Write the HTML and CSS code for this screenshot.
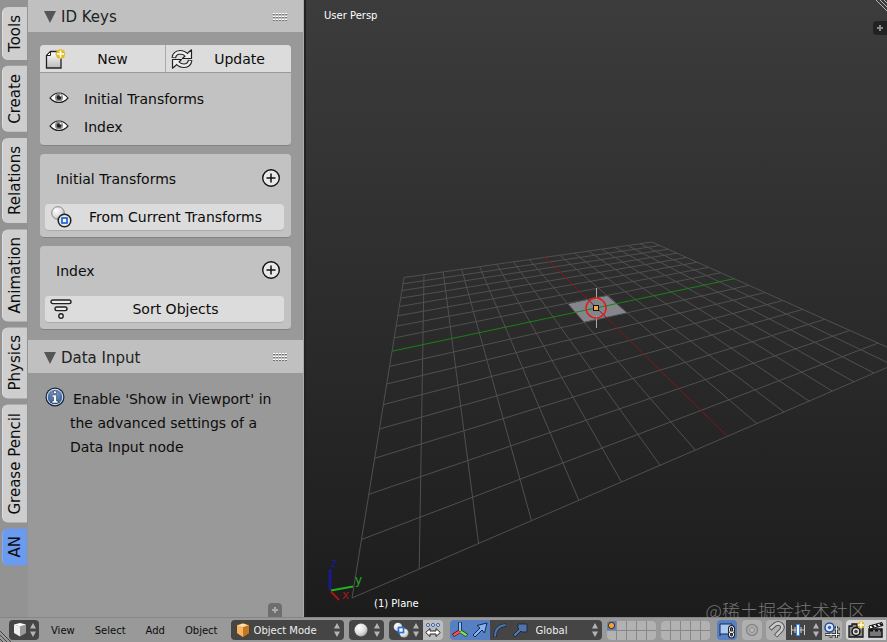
FILE: index.html
```html
<!DOCTYPE html>
<html lang="en">
<head>
<meta charset="utf-8">
<title>3D View</title>
<link rel="stylesheet" href="styles.css">
</head>
<body>
<svg class="defs" aria-hidden="true">
  <defs>
    <linearGradient id="paper" x1="0" y1="0" x2="0" y2="1"><stop offset="0" stop-color="#fff"/><stop offset="1" stop-color="#bbb"/></linearGradient>
    <radialGradient id="ball" cx=".35" cy=".3" r=".8"><stop offset="0" stop-color="#fff"/><stop offset=".6" stop-color="#ddd"/><stop offset="1" stop-color="#999"/></radialGradient>
    <radialGradient id="infoblue" cx=".5" cy=".3" r=".7"><stop offset="0" stop-color="#7fa0cc"/><stop offset="1" stop-color="#34588f"/></radialGradient>
    <symbol id="eye" viewBox="0 0 20 14">
      <path d="M1 7Q5 2 10 2T19 7Q15 11.500 10 11.500T1 7Z" fill="#fff" stroke="#222" stroke-width="1.200"/>
      <circle cx="10" cy="6.500" r="4" fill="#8a8a8a"/><circle cx="10" cy="6.500" r="2.300" fill="#222"/><circle cx="11.500" cy="4.500" r="1" fill="#fff"/>
    </symbol>
    <symbol id="plus" viewBox="0 0 20 20">
      <circle cx="10" cy="10" r="8.300" fill="#e8e8e8" stroke="#111" stroke-width="1.400"/>
      <path d="M10 5.500v9M5.500 10h9" stroke="#111" stroke-width="1.500"/>
    </symbol>
    <symbol id="grip" viewBox="0 0 15 9">
      <path d="M0 1.500h15M0 4.500h15M0 7.500h15" stroke="#777" stroke-dasharray="2 1"/>
      <path d="M0 .5h15M0 3.500h15M0 6.500h15" stroke="#fff" stroke-dasharray="2 1"/>
    </symbol>
    <symbol id="arrows" viewBox="0 0 6 14">
      <path d="M3 0l3 5.500H0zM3 14l3-5.500H0z" fill="#b4b4b4"/>
    </symbol>
    <g id="turn">
      <path d="M2.800 9Q3.500 3.500 9 3.200Q13 3.200 15.500 6" fill="none" stroke="#222" stroke-width="4.600"/>
      <path d="M20.500 .8V9.500H11.500L14 7l3-3.200z" fill="#eee" stroke="#222" stroke-width="1.200" stroke-linejoin="round"/>
      <path d="M2.900 8.200Q3.800 3.500 9 3.200Q13 3.200 16.500 6.800" fill="none" stroke="#eee" stroke-width="2.400"/>
    </g>
  </defs>
</svg>

<main class="workspace">
  <nav class="tabs" aria-label="Tool shelf tabs">
    <button class="tab">Tools</button>
    <button class="tab">Create</button>
    <button class="tab">Relations</button>
    <button class="tab">Animation</button>
    <button class="tab">Physics</button>
    <button class="tab">Grease Pencil</button>
    <button class="tab tab-active">AN</button>
  </nav>

  <aside class="shelf">
    <h2 class="panel-header">
      <svg class="fold" viewBox="0 0 12 12"><path d="M0 0h12L6 12z"/></svg>
      <span class="panel-title">ID Keys</span>
      <svg class="grip"><use href="#grip"/></svg>
    </h2>
    <div class="panel-body">
      <section class="box">
        <div class="button-row">
          <button class="btn">
            <svg class="icon" viewBox="0 0 20 22">
              <path d="M5.500 3.500H16V20H1.500V7.500z" fill="url(#paper)" stroke="#222" stroke-width="1.300"/>
              <path d="M5.500 3.500V7.500H1.500z" fill="#fff" stroke="#222"/>
              <circle cx="15.500" cy="6" r="4.500" fill="#e0b410"/>
              <path d="M15.500 1v10M10.500 6h10M12 2.500l7 7M19 2.500l-7 7" stroke="#e3bd22" stroke-width="2"/>
              <path d="M15.500 2.500v7M12 6h7" stroke="#fff" stroke-width="1.600"/>
            </svg>
            <span>New</span>
          </button>
          <button class="btn">
            <svg class="icon icon-wide" viewBox="0 0 22 20">
              <use href="#turn"/>
              <use href="#turn" transform="rotate(180 11 10)"/>
            </svg>
            <span>Update</span>
          </button>
        </div>
        <ul class="key-list">
          <li><button class="eye" aria-label="Toggle Initial Transforms"><svg><use href="#eye"/></svg></button>Initial Transforms</li>
          <li><button class="eye" aria-label="Toggle Index"><svg><use href="#eye"/></svg></button>Index</li>
        </ul>
      </section>

      <section class="box box-key">
        <div class="key-head"><h3>Initial Transforms</h3><button class="add" aria-label="Add to Initial Transforms"><svg><use href="#plus"/></svg></button></div>
        <button class="btn btn-round">
          <svg class="icon icon-wide" viewBox="0 0 22 22">
            <circle cx="8" cy="7" r="6.300" fill="url(#ball)" stroke="#888"/>
            <circle cx="14.500" cy="14.500" r="6.300" fill="#e8e8e8" stroke="#222" stroke-width="1.500"/>
            <rect x="12" y="12" width="5" height="5" fill="#fff" stroke="#1d63d8" stroke-width="1.700"/>
          </svg>
          <span>From Current Transforms</span>
        </button>
      </section>

      <section class="box box-key">
        <div class="key-head"><h3>Index</h3><button class="add" aria-label="Add to Index"><svg><use href="#plus"/></svg></button></div>
        <button class="btn btn-round">
          <svg class="icon icon-wide" viewBox="0 0 22 20">
            <g fill="#eee" stroke="#222" stroke-width="1.400">
              <rect x="1" y="1" width="20" height="3.600" rx="1.800"/>
              <rect x="5" y="8" width="12" height="3.600" rx="1.800"/>
              <circle cx="11" cy="17" r="2.200"/>
            </g>
          </svg>
          <span>Sort Objects</span>
        </button>
      </section>
    </div>

    <h2 class="panel-header">
      <svg class="fold" viewBox="0 0 12 12"><path d="M0 0h12L6 12z"/></svg>
      <span class="panel-title">Data Input</span>
      <svg class="grip"><use href="#grip"/></svg>
    </h2>
    <div class="info">
      <svg class="info-icon" viewBox="0 0 20 20">
        <circle cx="10" cy="10" r="9.500" fill="#14233e"/>
        <circle cx="10" cy="10" r="8.300" fill="#dfe6f0"/>
        <circle cx="10" cy="10" r="7.300" fill="url(#infoblue)"/>
        <path d="M8.500 4h3v2.500h-3zM7 8h4.500v6H13v2H7v-2h1.500v-4H7z" fill="#fff" stroke="#14233e" stroke-width=".5"/>
      </svg>
      <p>Enable 'Show in Viewport' in<br>the advanced settings of a<br>Data Input node</p>
    </div>
    <button class="shelf-toggle" aria-label="Show operator panel"><svg viewBox="0 0 14 14"><path d="M7 4v6M4 7h6" stroke="#aaa" stroke-width="2"/></svg></button>
  </aside>

  <section class="viewport" aria-label="3D viewport">
    <svg class="scene" viewBox="306 0 581 617" preserveAspectRatio="xMinYMax slice">
      <polygon points="568,304 608,295.500 627,313 584,322" fill="#85858c"/>
      <g id="grid" class="grid"></g>
      <path d="M596.500 288v12M596.500 316v12" stroke="#aaa"/>
      <circle cx="596" cy="308" r="10" class="cursor"/>
      <rect x="593.500" y="305.500" width="5" height="5" fill="#f0a850" stroke="#111"/>
      <path d="M330 590V569" stroke="#1a1a8c" stroke-width="3"/>
      <path d="M331 590.500L353 586.500" stroke="#1fb41f" stroke-width="2"/>
      <path d="M331 591.500L339 600" stroke="#a81414" stroke-width="2"/>
      <g class="axis-names">
        <text x="331" y="567" fill="#1a1a8c">z</text>
        <text x="355" y="584" fill="#1fb41f">y</text>
        <text x="342" y="599" fill="#a81414">x</text>
      </g>
    </svg>
    <span class="view-name">User Persp</span>
    <span class="object-name">(1) Plane</span>
    <svg class="corner" viewBox="0 0 12 12"><path d="M1 0l11 11M5 0l7 7M9 0l3 3" stroke="#b8b8b8"/></svg>
    <button class="side-toggle" aria-label="Show properties"><svg viewBox="0 0 14 14"><path d="M7 4v6M4 7h6" stroke="#888" stroke-width="2"/></svg></button>
  </section>
</main>

<footer class="header-bar">
  <svg class="corner-bl" viewBox="0 0 12 12"><path d="M0 1l11 11M0 5l7 7M0 9l3 3" stroke="#444"/></svg>
  <button class="dark editor" aria-label="Editor type">
    <svg class="i16" viewBox="0 0 16 16"><path d="M2 2.500l6 2v10L2 11z" fill="#eee"/><path d="M14 2.500l-6 2v10l6-3.500z" fill="#999"/><path d="M2 2.500L8 1l6 1.500-6 2z" fill="#fff"/></svg>
    <svg class="arrows"><use href="#arrows"/></svg>
  </button>
  <nav class="menus">
    <button>View</button><button>Select</button><button>Add</button><button>Object</button>
  </nav>
  <div class="dark mode">
    <svg class="i16" viewBox="0 0 16 16"><path d="M2 3l6-2 6 2v8l-6 4-6-4z" fill="#ffe0b0" stroke="#5a3208" stroke-width=".6"/><path d="M2 3l6 2v10l-6-4z" fill="#f5b566"/><path d="M14 3L8 5v10l6-4z" fill="#c8761c"/></svg>
    <select aria-label="Mode"><option>Object Mode</option></select>
    <svg class="arrows"><use href="#arrows"/></svg>
  </div>
  <button class="dark shading" aria-label="Viewport shading">
    <svg class="i16" viewBox="0 0 16 16"><circle cx="8" cy="8" r="6.500" fill="url(#ball)"/></svg>
    <svg class="arrows"><use href="#arrows"/></svg>
  </button>
  <div class="group pivot-group">
    <button class="dark pivot" aria-label="Pivot point">
      <svg class="i16" viewBox="0 0 16 16"><circle cx="5" cy="5" r="4.300" fill="url(#ball)"/><circle cx="11" cy="11" r="4.500" fill="url(#ball)"/><rect x="5.500" y="5.500" width="5" height="5" fill="#fff" stroke="#2a70d8" stroke-width="1.700"/></svg>
      <svg class="arrows"><use href="#arrows"/></svg>
    </button>
    <button class="light pale" aria-label="Manipulate center points">
      <svg class="i16" viewBox="0 0 16 16"><g fill="#fff" stroke="#2858a8"><circle cx="3" cy="3" r="1.500"/><circle cx="8" cy="3" r="1.500"/><circle cx="13" cy="3" r="1.500"/></g><path d="M.7 10.500L5 6.500v2.500h6V6.500l4.300 4-4.300 4V12H5v2.500z" fill="#fff" stroke="#222"/></svg>
    </button>
  </div>
  <div class="group manip-group">
    <button class="on" aria-label="Manipulator"><svg class="i18" viewBox="0 0 18 18"><path d="M9 10V1" stroke="#10244c" stroke-width="3.600"/><path d="M9 10l7 4.500" stroke="#123a12" stroke-width="3.800"/><path d="M9 10l-7 4.500" stroke="#4a1010" stroke-width="3.800"/><path d="M9 10V1.500" stroke="#8fc0ff" stroke-width="2"/><path d="M9.500 10.500l6 3.800" stroke="#7ee850" stroke-width="2.200"/><path d="M8.500 10.500l-6 3.800" stroke="#ff5050" stroke-width="2.200"/></svg></button>
    <button class="on" aria-label="Translate"><svg class="i18" viewBox="0 0 18 18"><path d="M2 14l7-7-3-2.500L16 2l-2.500 10L11 9l-7 7z" fill="#86b2f0" stroke="#14294f" stroke-linejoin="round"/></svg></button>
    <button class="off" aria-label="Rotate"><svg class="i18" viewBox="0 0 18 18"><path d="M4 16Q4 5 15 4" fill="none" stroke="#1c2c48" stroke-width="3.600"/><path d="M4 15.500Q4 5 14.500 4" fill="none" stroke="#5274a8" stroke-width="1.800"/></svg></button>
    <button class="off" aria-label="Scale"><svg class="i18" viewBox="0 0 18 18"><path d="M2 14l6-6-1-1V3h9v8h-5l-1-1-6 6z" fill="#5274a8" stroke="#1c2c48"/></svg></button>
    <div class="dark orient">
      <select aria-label="Transform orientation"><option>Global</option></select>
      <svg class="arrows"><use href="#arrows"/></svg>
    </div>
  </div>
  <div class="layers" role="group" aria-label="Layers 1 to 10">
    <button class="layer-on" aria-label="Layer 1"></button><button aria-label="Layer 2"></button><button aria-label="Layer 3"></button><button aria-label="Layer 4"></button><button aria-label="Layer 5"></button>
    <button aria-label="Layer 6"></button><button aria-label="Layer 7"></button><button aria-label="Layer 8"></button><button aria-label="Layer 9"></button><button aria-label="Layer 10"></button>
  </div>
  <div class="layers" role="group" aria-label="Layers 11 to 20">
    <button aria-label="Layer 11"></button><button aria-label="Layer 12"></button><button aria-label="Layer 13"></button><button aria-label="Layer 14"></button><button aria-label="Layer 15"></button>
    <button aria-label="Layer 16"></button><button aria-label="Layer 17"></button><button aria-label="Layer 18"></button><button aria-label="Layer 19"></button><button aria-label="Layer 20"></button>
  </div>
  <button class="on round" aria-label="Lock camera and layers"><svg class="i18" viewBox="0 0 18 18"><path d="M2 3h12v10H2z" fill="#aac8f2" stroke="#14294f"/><path d="M2 13v2" stroke="#14294f"/><g fill="none"><rect x="11.500" y="5.500" width="4" height="6" rx="2" stroke="#222" stroke-width="3"/><rect x="11.500" y="11" width="4" height="5" rx="2" stroke="#222" stroke-width="3"/><rect x="11.500" y="5.500" width="4" height="6" rx="2" stroke="#fff"/><rect x="11.500" y="11" width="4" height="5" rx="2" stroke="#fff"/></g></svg></button>
  <button class="light round" aria-label="Proportional editing"><svg class="i18" viewBox="0 0 18 18"><circle cx="9" cy="9" r="5.500" fill="none" stroke="#888" stroke-width="1.500"/><circle cx="9" cy="9" r="2.500" fill="#bbb" stroke="#888"/></svg></button>
  <div class="group snap-group">
    <button class="light" aria-label="Snap"><svg class="i18" viewBox="0 0 18 18"><path d="M3 8l5-4.500Q12 1 14.500 4T13 10.500L8.500 15" fill="none" stroke="#555" stroke-width="4.500"/><path d="M3.500 7.500L8 3.500Q12 1 14.500 4T13 10.500L9 14.500" fill="none" stroke="#ccc" stroke-width="2.500"/></svg></button>
    <button class="dark snap" aria-label="Snap element"><svg class="i16" viewBox="0 0 16 16"><path d="M1.500 3v10M14.500 3v10M5 5v6M11 5v6M1 8h14" stroke="#ccc"/><path d="M8 2v12" stroke="#3f80e8" stroke-width="4"/><path d="M8 3v10" stroke="#fff" stroke-width="2"/></svg><svg class="arrows"><use href="#arrows"/></svg></button>
    <button class="light" aria-label="Snap target"><svg class="i18" viewBox="0 0 18 18"><path d="M8 2v15M13.500 5v12M2 13.500h15M8 8h9" stroke="#222" stroke-width="2.600"/><path d="M8 2v14.500M13.500 5v11.500M2.500 13.500h14M8 8h8.500" stroke="#eee"/><circle cx="6.500" cy="6.500" r="4.500" fill="#dce8fa" stroke="#244c92" stroke-width="1.500"/><circle cx="6.500" cy="6.500" r="1.700" fill="#2a66cc"/></svg></button>
  </div>
  <div class="group render-group">
    <button class="white" aria-label="Render image"><svg class="i18" viewBox="0 0 18 18"><path d="M2 5h3V3h5v2h6v11H2z" fill="#888" stroke="#111" stroke-width="1.300"/><circle cx="9" cy="10.500" r="4" fill="#ddd" stroke="#111" stroke-width="1.500"/><circle cx="9" cy="10.500" r="1.800" fill="#444"/><circle cx="14" cy="4" r="3.500" fill="#e3b71c"/><path d="M14 1v6M11 4h6" stroke="#fff" stroke-width="1.400"/></svg></button>
    <button class="white" aria-label="Render animation"><svg class="i18" viewBox="0 0 18 18"><path d="M2 8h13v8H2z" fill="#777" stroke="#111" stroke-width="1.500"/><path d="M2 5L15 1.500 16 4.500 3 8z" fill="#fff" stroke="#111"/><path d="M5 4.500l2 2M9 3.500l2 2M13 2.500l2 2M3 9.500h11" stroke="#111" stroke-width="2" stroke-dasharray="3 2"/></svg></button>
  </div>
</footer>
<div class="watermark">@稀土掘金技术社区</div>
<script src="grid.js"></script>
</body>
</html>
```
FILE: styles.css
```css
* { box-sizing: border-box; }
html, body { height: 100%; }
body {
  margin: 0;
  display: flex;
  flex-direction: column;
  position: relative;
  overflow: hidden;
  background: #999;
  color: #0c0c0c;
  font: 14px "DejaVu Sans", sans-serif;
}
button, select { font: inherit; color: inherit; border: 0; margin: 0; padding: 0; background: none; }
svg { display: block; flex: none; }
h2, h3, p, ul { margin: 0; padding: 0; font: inherit; }
.defs { position: absolute; width: 0; height: 0; }

.workspace { flex: 1; min-height: 0; display: grid; grid-template-columns: 28px 276px 1fr; }

.tabs { display: flex; flex-direction: column; align-items: flex-end; gap: 6px; padding: 7px 1px 0 0; background: #939393; }
.tab {
  writing-mode: vertical-rl;
  transform: rotate(180deg);
  width: 25px;
  padding: 8px 0;
  font-size: 15px;
  line-height: 25px;
  background: #cecece;
  border-right: 1px solid #dedede;
  border-radius: 0 6px 6px 0;
}
.tab-active { background: #6b9bef; border-color: #7daaf5; }

.shelf { position: relative; background: #999; border-right: 1px solid #aaa; }
.panel-header { display: flex; align-items: center; height: 33px; padding: 2px 15px 0 16px; background: #c0c0c0; color: #222; font-size: 15px; }
.shelf > .panel-header:first-child { height: 32px; }
.fold { width: 12px; height: 12px; fill: #555; }
.panel-title { flex: 1; margin-left: 5px; line-height: 30px; }
.grip { width: 15px; height: 9px; }
.panel-body { display: flex; flex-direction: column; gap: 8px; padding: 13px 12px 10px; }
.box { background: #c2c2c2; border-radius: 4px; border-bottom: 1px solid #828282; }
.button-row { display: grid; grid-template-columns: 1fr 1fr; gap: 1px; background: #aaa; border-radius: 4px 4px 0 0; overflow: hidden; border-bottom: 1px solid #999; }
.btn { display: flex; align-items: center; width: 100%; height: 27px; padding: 0 5px; background: #dcdcdc; }
.btn span { flex: 1; text-align: center; }
.btn-round { border-radius: 4px; border-bottom: 1px solid #aaa; }
.icon { width: 20px; height: 22px; }
.icon-wide { width: 22px; height: 22px; }
.key-list { list-style: none; padding: 12px 9px 4px; }
.key-list li { display: flex; align-items: center; height: 28px; gap: 15px; }
.eye { padding-bottom: 3px; }
.eye svg { width: 20px; height: 14px; }
.box-key { padding: 11px 7px 6px 5px; }
.key-head { display: flex; align-items: center; justify-content: space-between; height: 28px; padding: 0 3px 0 11px; margin-bottom: 11px; }
.add { padding-bottom: 3px; }
.add svg { width: 20px; height: 20px; }
.info { display: flex; gap: 5px; padding: 14px 10px 0 17px; line-height: 24px; }
.info p { text-indent: 3px; white-space: nowrap; }
.info-icon { width: 20px; height: 20px; }
.shelf-toggle { position: absolute; right: 21px; bottom: 0; background: #6e6e6e; border-radius: 4px 4px 0 0; }
.shelf-toggle svg, .side-toggle svg { width: 14px; height: 14px; }

.viewport { position: relative; overflow: hidden; border-left: 2px solid #222; background: linear-gradient(#3c3c3c, #1c1c1c); color: #fff; font-size: 10px; }
.scene { width: 100%; height: 100%; }
.grid line { stroke: #505050; stroke-width: 1; }
.grid .axis-x { stroke: #80161e; }
.grid .axis-y { stroke: #188218; }
.cursor { fill: none; stroke: #e01c1c; stroke-width: 1.5; }
.axis-names { font-size: 12px; }
.view-name { position: absolute; left: 18px; top: 10px; }
.object-name { position: absolute; left: 68px; bottom: 8px; }
.corner { position: absolute; right: 0; top: 0; width: 12px; height: 12px; }
.side-toggle { position: absolute; right: 0; top: 21px; background: #222; border-radius: 4px 0 0 4px; }

.header-bar { position: relative; display: flex; align-items: center; height: 25px; padding-left: 9px; background: #999; border-top: 1px solid #868686; font-size: 10px; overflow: hidden; }
.corner-bl { position: absolute; left: 0; bottom: 0; width: 12px; height: 12px; }
.header-bar button, .header-bar select { flex: none; }
.i16 { width: 16px; height: 16px; }
.i18 { width: 18px; height: 18px; }
.arrows { width: 6px; height: 14px; }
.dark { display: flex; flex: none; align-items: center; justify-content: space-between; height: 20px; padding: 0 4px; background: #454545; border-radius: 4px; color: #eee; }
.editor { width: 30px; padding: 0 3px; }
.menus { display: flex; gap: 20px; margin: 0 13px 0 12px; }
.mode { width: 113px; }
.mode select, .orient select { flex: 1; min-width: 0; appearance: none; outline: 0; height: 20px; }
.mode select { margin-left: 3px; }
.shading { width: 35px; margin: 0 5px; }
.group { display: flex; flex: none; border-radius: 4px; overflow: hidden; }
.pivot { width: 34px; border-radius: 0; }
.light, .on, .off, .white { display: grid; place-items: center; width: 20px; height: 20px; }
.light { background: #b0b0b0; }
.pale { background: #bdbdbd; }
.on { background: #5680c2; }
.off { background: #454545; }
.white { background: #d6d6d6; }
.round { border-radius: 4px; }
.manip-group { margin: 0 5px 0 7px; }
.orient { width: 72px; padding-left: 6px; border-radius: 0; }
.layers { display: grid; flex: none; grid-template: repeat(2, 9px) / repeat(5, 9px); gap: 1px; width: 49px; margin-right: 5px; background: #888; border-radius: 4px; overflow: hidden; }
.layers button { background: #b2b2b2; }
.layers .layer-on { background: radial-gradient(circle, #f5a040 2px, #5a3208 3px, #5680c2 4px); }
.header-bar > .on { margin: 0 5px 0 2px; }
.header-bar > .light { margin-right: 4px; }
.snap { width: 36px; border-radius: 0; padding: 0 3px 0 4px; }
.render-group { margin-left: 4px; border-radius: 4px 0 0 4px; }

.watermark { position: absolute; right: 21px; bottom: 19px; color: rgba(150, 150, 150, .75); font: 300 18px/26px "Noto Sans CJK SC", sans-serif; pointer-events: none; }
```
FILE: grid.js
```js
// Ground grid: a 16 x 16 square projected onto the four screen corners below.
const back = [404, 277.5], far = [652, 242], right = [910.3, 357.5], front = [352, 598];
const cells = 16;

const dx1 = far[0] - right[0], dx2 = front[0] - right[0], sx = back[0] - far[0] + right[0] - front[0];
const dy1 = far[1] - right[1], dy2 = front[1] - right[1], sy = back[1] - far[1] + right[1] - front[1];
const det = dx1 * dy2 - dx2 * dy1;
const g = (sx * dy2 - dx2 * sy) / det;
const h = (dx1 * sy - sx * dy1) / det;

function project(u, v) {
  const w = g * u + h * v + 1;
  return [0, 1].map(i =>
    ((far[i] - back[i] + g * far[i]) * u + (front[i] - back[i] + h * front[i]) * v + back[i]) / w);
}

const grid = document.getElementById('grid');
function addLine(from, to, className) {
  const line = document.createElementNS('http://www.w3.org/2000/svg', 'line');
  [['x1', from[0]], ['y1', from[1]], ['x2', to[0]], ['y2', to[1]]].forEach(([k, n]) => line.setAttribute(k, n.toFixed(1)));
  if (className) line.setAttribute('class', className);
  grid.appendChild(line);
}

for (let i = 0; i <= cells; i++) {
  if (i === cells / 2) continue;
  const t = i / cells;
  addLine(project(t, 0), project(t, 1));
  addLine(project(0, t), project(1, t));
}
addLine(project(0.5, 0), project(0.5, 1), 'axis-x');
addLine(project(0, 0.5), project(1, 0.5), 'axis-y');
```
